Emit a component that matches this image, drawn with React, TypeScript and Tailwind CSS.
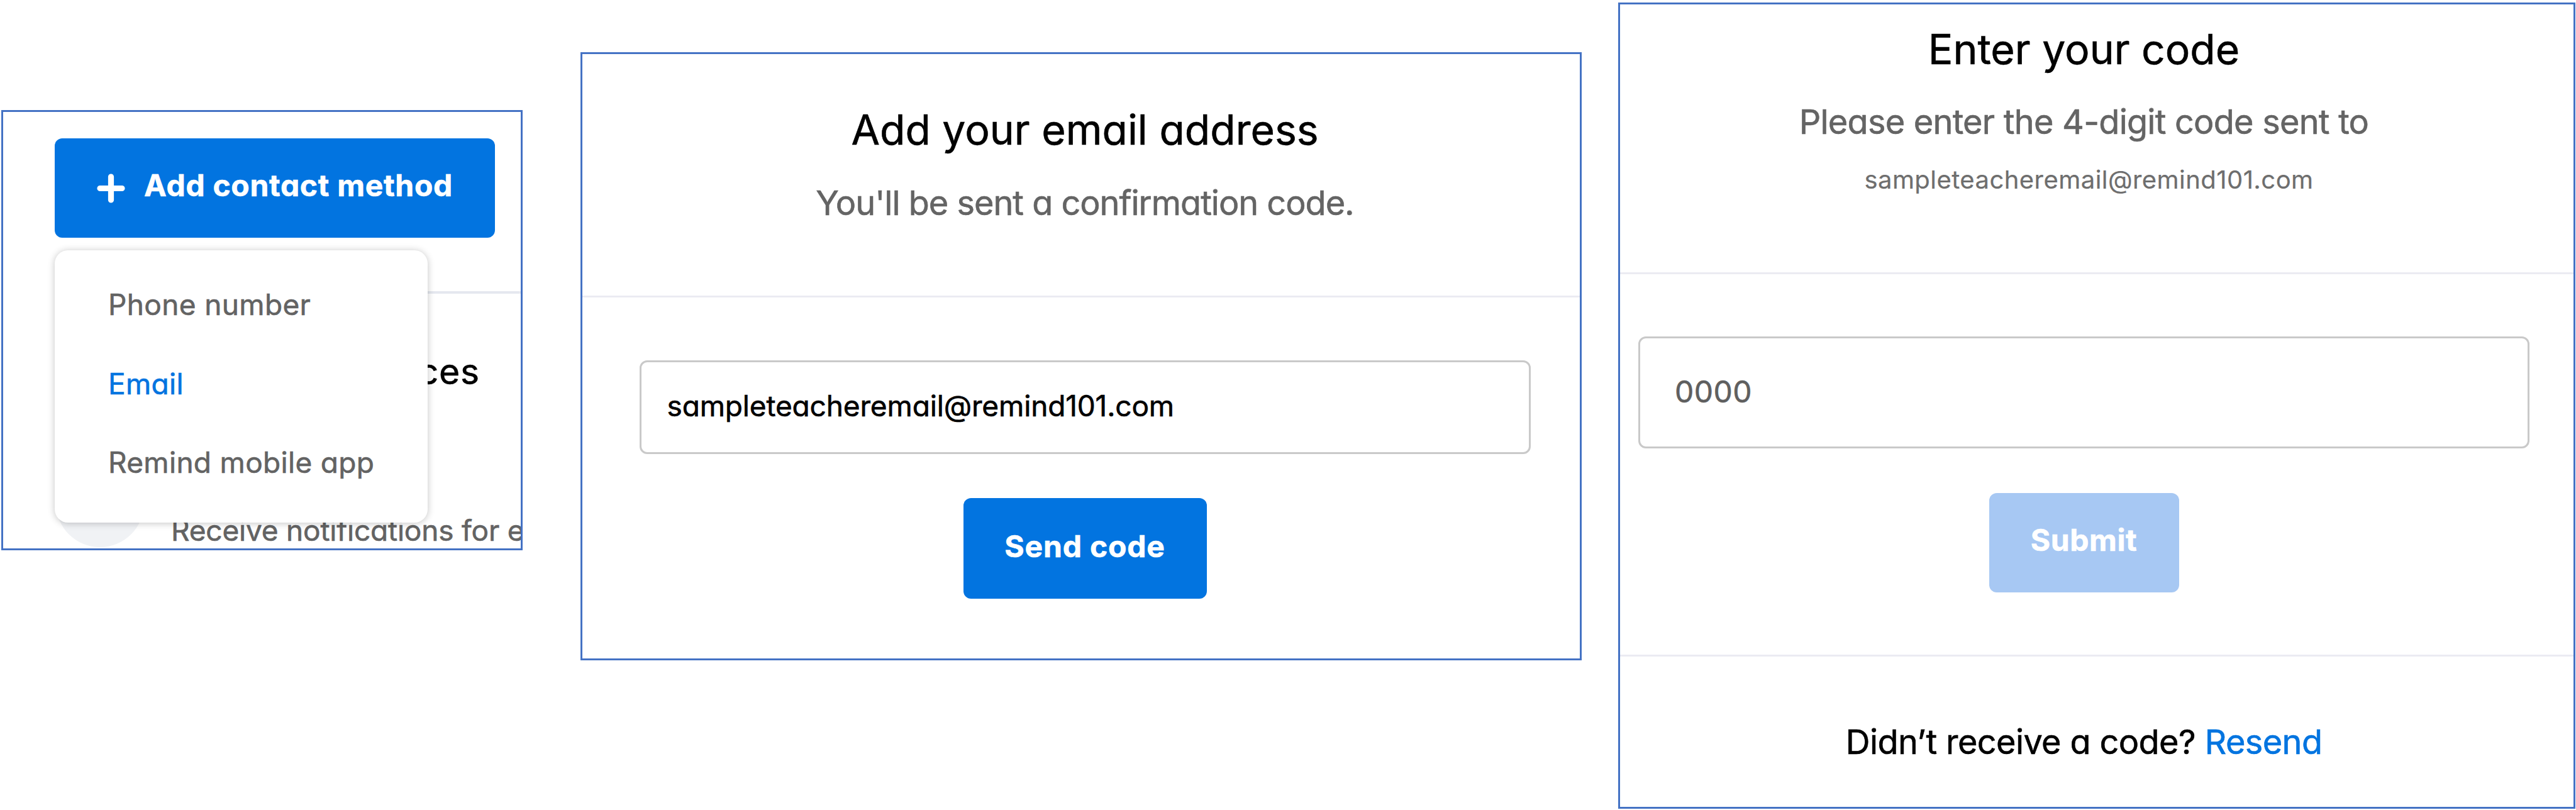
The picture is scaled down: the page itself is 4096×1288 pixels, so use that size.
import type { ReactNode } from 'react'

interface PanelProps {
  className: string
  children: ReactNode
}

function Panel({ className, children }: PanelProps) {
  return (
    <section className={`shrink-0 border-[3px] border-[#4472c4] bg-white overflow-hidden ${className}`}>
      {children}
    </section>
  )
}

const menuItems = [
  { label: 'Phone number', className: 'text-[#636363] tracking-[0.35px]' },
  { label: 'Email', className: 'text-[#0274e0] tracking-[0.3px]' },
  { label: 'Remind mobile app', className: 'text-[#636363] tracking-[0.3px]' },
]

function ContactMethodPanel() {
  return (
    <Panel className="relative ml-[2px] mt-[175px] w-[829px] h-[700px]">
      <button className="ml-[82px] mt-[42px] flex h-[158px] w-[700px] items-center rounded-xl bg-[#0274e0] pl-[67px] text-white">
        <svg width="45" height="47" viewBox="0 0 45 47" stroke="currentColor" strokeWidth="9.2" strokeLinecap="round">
          <path d="M22.5 5v37M5 23.5h35" />
        </svg>
        <span className="mb-[8px] ml-[30px] text-[48px] leading-[64px] font-bold tracking-[0.7px]">
          Add contact method
        </span>
      </button>

      <div className="mt-[85px] ml-[84px] h-1 bg-[#e5e8ef]" />

      <h2 className="mt-[92px] ml-[530px] w-[228px] text-right text-[57px] leading-[64px] tracking-[0.8px] text-black">
        Devices
      </h2>

      <div className="mt-[107px] ml-[84px] flex items-start">
        <div className="size-[140px] shrink-0 rounded-full bg-[#f0f2f5]" />
        <p className="mt-[85px] ml-[43px] text-[46px] leading-[56px] tracking-[-0.2px] whitespace-nowrap text-[#636363]">
          Receive notifications for each
        </p>
      </div>

      {/* Open dropdown, covers the settings behind it */}
      <ul className="absolute top-[220px] left-[82px] h-[433px] w-[593px] rounded-[21px] bg-white pt-[24px] pl-[85px] shadow-[0_1px_12px_rgba(0,0,0,0.24)]">
        {menuItems.map((item) => (
          <li key={item.label} className={`text-[46px] leading-[125.5px] ${item.className}`}>
            {item.label}
          </li>
        ))}
      </ul>
    </Panel>
  )
}

function AddEmailPanel() {
  return (
    <Panel className="ml-[92px] mt-[83px] w-[1592px] h-[967px]">
      <header className="flex h-[387px] flex-col items-center border-b-[3px] border-[#ebebf2] pt-[80px] pl-[12px]">
        <h1 className="text-[66px] leading-[80px] text-black">Add your email address</h1>
        <p className="mt-[45px] text-[54px] leading-[64px] tracking-[-1px] text-[#646464]">
          You'll be sent a confirmation code.
        </p>
      </header>
      <form className="flex flex-col items-center pt-[100px] pl-[12px]">
        <input
          type="text"
          defaultValue="sampleteacheremail@remind101.com"
          className="h-[149px] w-[1417px] rounded-xl border-[3px] border-[#c9c9c9] pb-[6px] pl-[41px] text-[46px] tracking-[-0.15px] text-black"
        />
        <button
          type="button"
          className="mt-[70px] h-[160px] w-[387px] rounded-xl bg-[#0274e0] pb-[6px] text-[48px] font-bold tracking-[0.8px] text-white"
        >
          Send code
        </button>
      </form>
    </Panel>
  )
}

function EnterCodePanel() {
  return (
    <Panel className="ml-[58px] mt-[4px] w-[1522px] h-[1282px]">
      <header className="flex h-[429px] flex-col items-center border-b-[3px] border-[#ebebf2] pt-[31px] pr-[41px]">
        <h1 className="text-[66px] leading-[80px] text-black">Enter your code</h1>
        <p className="mt-[44px] text-[54px] leading-[64px] tracking-[-0.75px] text-[#646464]">
          Please enter the 4-digit code sent to
        </p>
        <p className="mt-[36px] pl-4 text-[40px] leading-[48px] tracking-[0.45px] text-[#6e6e6e] [font-feature-settings:normal] [-webkit-text-stroke:0.2px]">
          sampleteacheremail@remind101.com
        </p>
      </header>
      <form className="flex h-[605px] flex-col items-center pt-[99px] pr-[41px]">
        <input
          type="text"
          placeholder="0000"
          className="h-[178px] w-[1417px] rounded-xl border-[3px] border-[#c9c9c9] pb-[3px] pl-[55px] text-[48px] tracking-[0.5px] text-black placeholder:text-[#5f5f5f] placeholder:opacity-100"
        />
        <button
          type="button"
          disabled
          className="mt-[71px] h-[158px] w-[302px] rounded-xl bg-[#a7c8f3] pb-[9px] text-[48px] font-bold tracking-[0.6px] text-white"
        >
          Submit
        </button>
      </form>
      <footer className="border-t-[3px] border-[#ebebf2] pt-[104px] pr-[41px] text-center text-[54px] leading-[64px] tracking-[-0.6px] text-black">
        Didn’t receive a code? <a className="text-[#0274e0]">Resend</a>
      </footer>
    </Panel>
  )
}

export default function App() {
  return (
    <div className="flex h-[1288px] w-[4096px] items-start overflow-hidden bg-white font-['Inter','Liberation_Sans',sans-serif] [font-feature-settings:'cv11'] [-webkit-text-stroke:0.6px]">
      <ContactMethodPanel />
      <AddEmailPanel />
      <EnterCodePanel />
    </div>
  )
}
